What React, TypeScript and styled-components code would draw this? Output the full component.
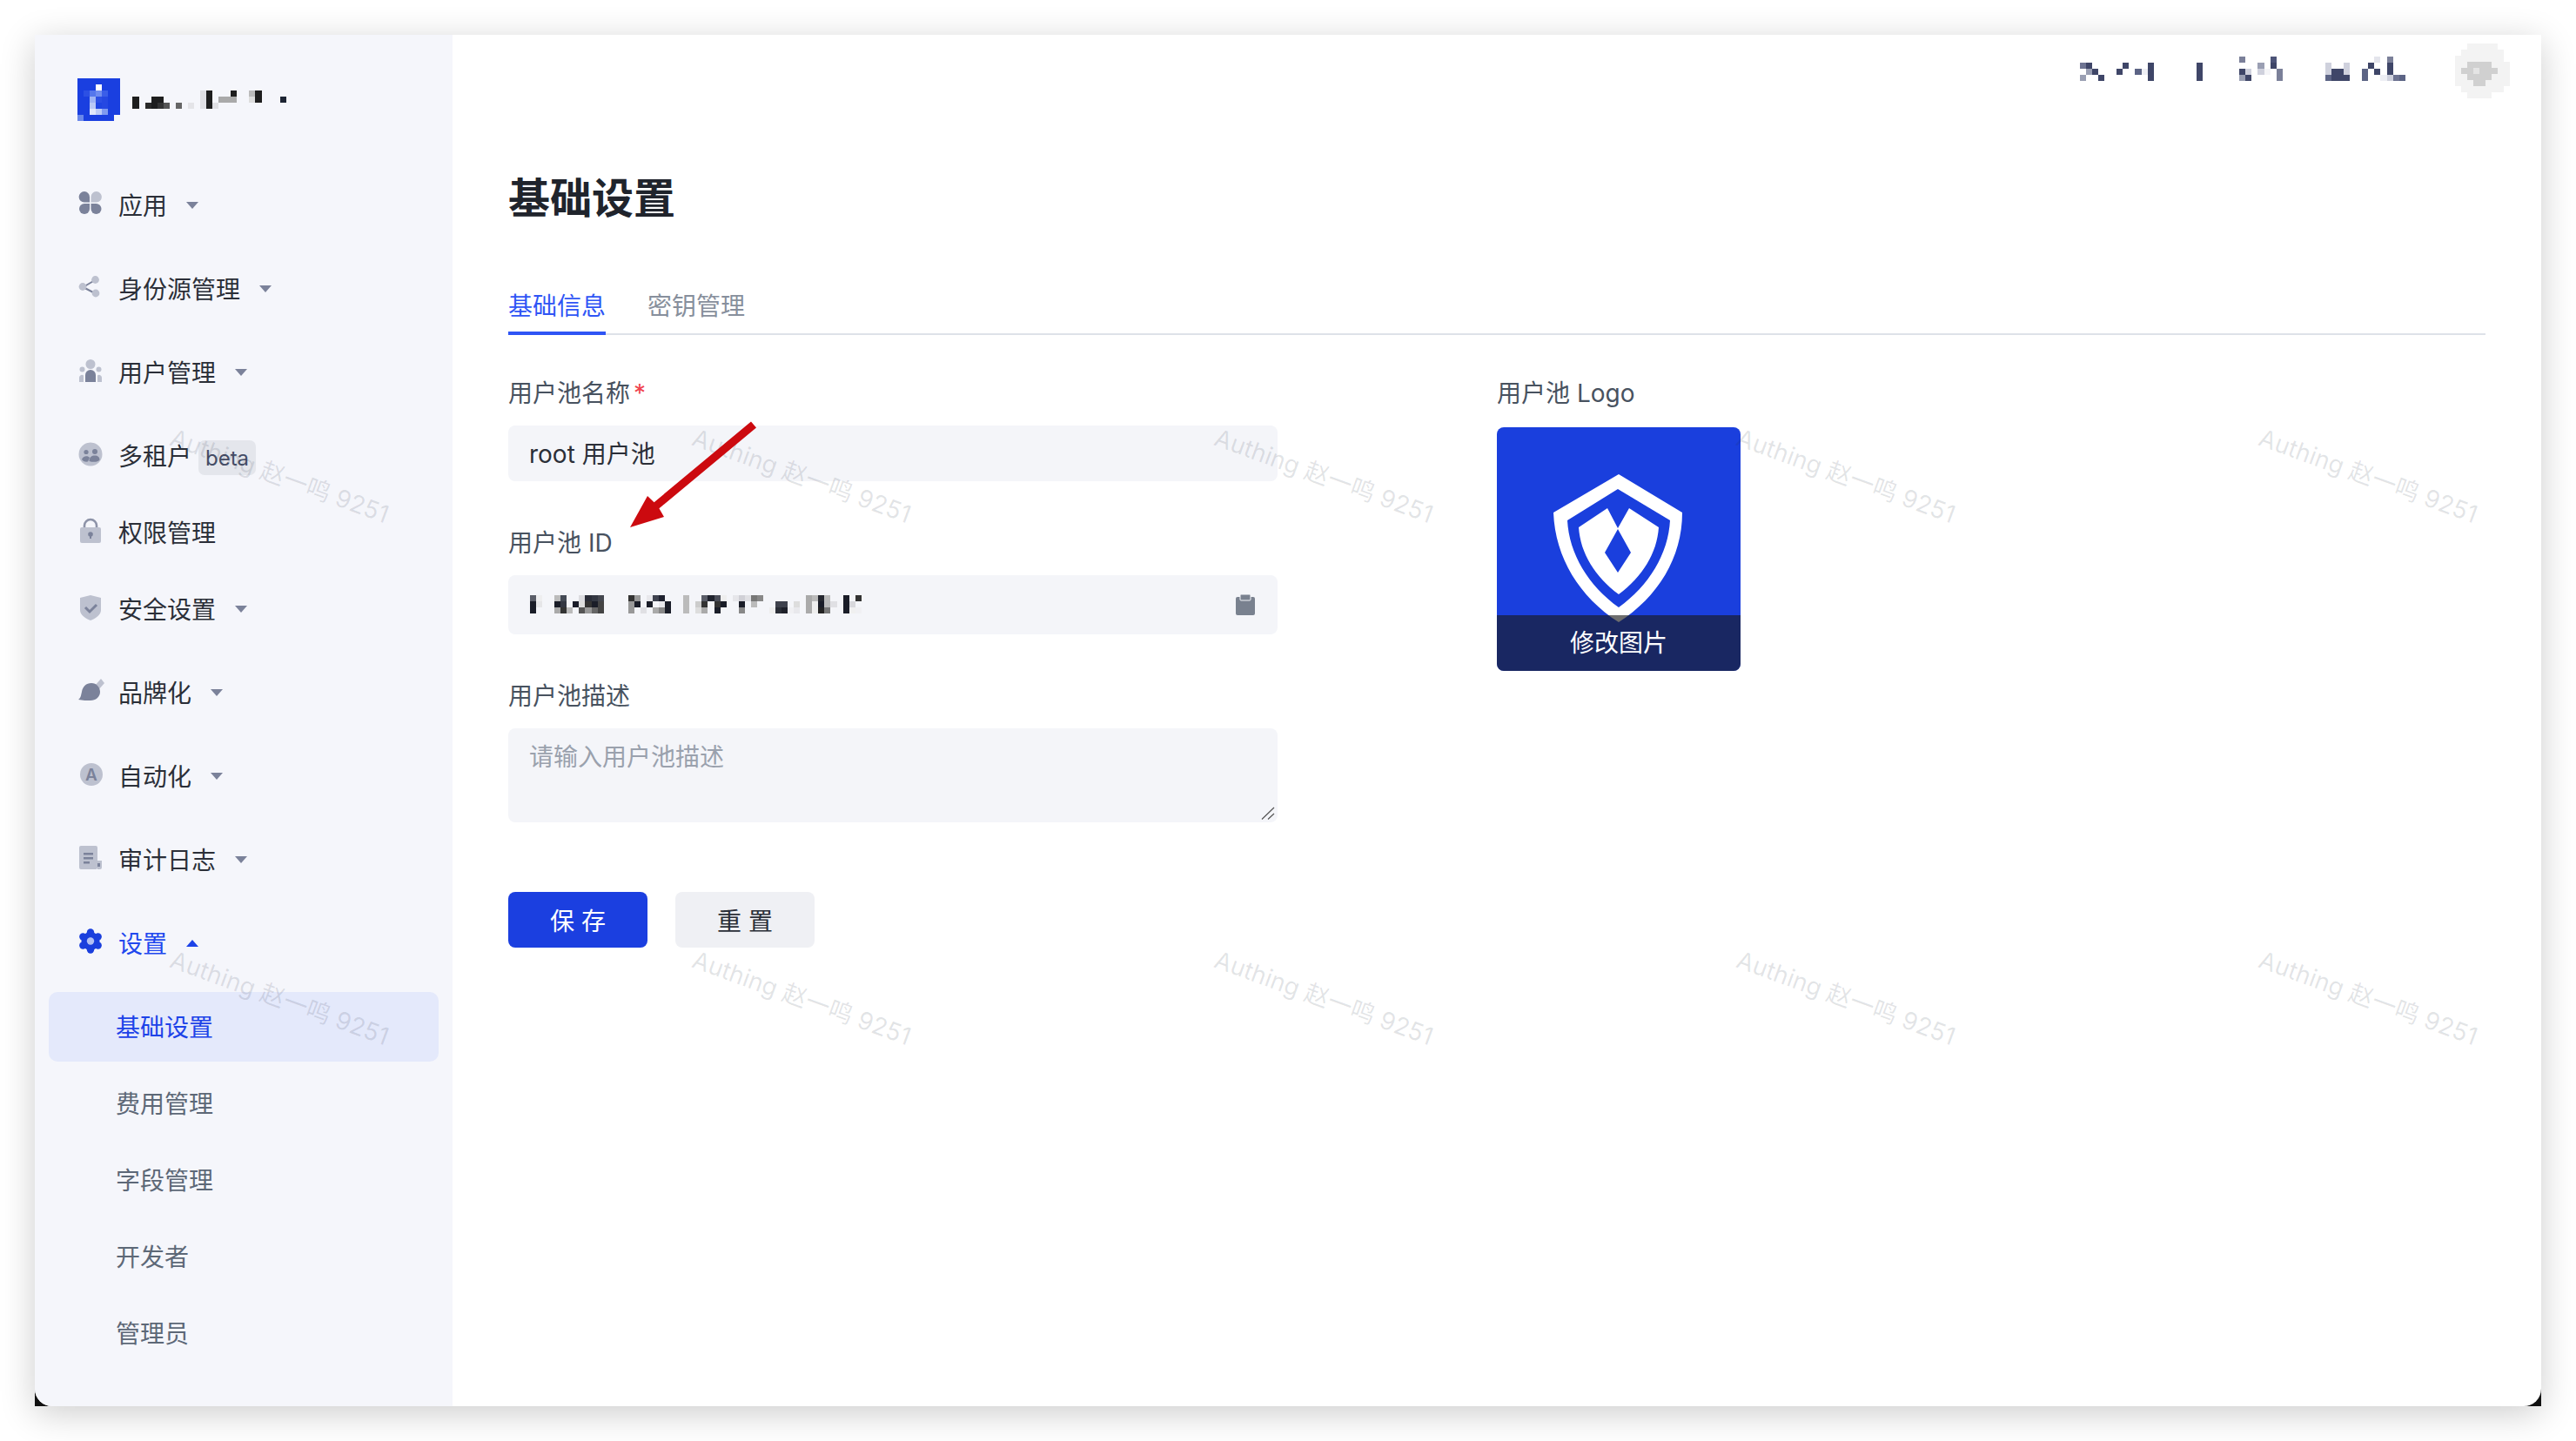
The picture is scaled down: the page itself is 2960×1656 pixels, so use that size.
import React from "react";
import styled, { createGlobalStyle } from "styled-components";

const GlobalStyle = createGlobalStyle`
  html, body {
    margin: 0;
    padding: 0;
    background: #fff;
    font-family: Inter, "Noto Sans CJK SC", sans-serif;
  }
  * {
    box-sizing: border-box;
  }
`;

const Page = styled.div`
  width: 2960px;
  height: 1656px;
  padding: 40px;
  overflow: hidden;
`;

const Frame = styled.div`
  position: relative;
  width: 2880px;
  height: 1576px;
  background: linear-gradient(#fff 50%, #111 50%);
  box-shadow: 0 8px 38px rgba(0, 0, 0, 0.2);
`;

const Shell = styled.div`
  display: flex;
  width: 100%;
  height: 100%;
  overflow: hidden;
  background: #fff;
  border-radius: 0 0 20px 20px;
`;

const Sidebar = styled.aside`
  flex: 0 0 480px;
  padding: 50px 16px 0;
  background: #f5f6fb;
`;

const Brand = styled.div`
  height: 50px;
  margin-left: 33px;
`;

const Nav = styled.nav`
  margin-top: 56px;
`;

const MenuRow = styled.div<{ $group?: boolean; $active?: boolean }>`
  display: flex;
  align-items: center;
  height: 80px;
  margin-bottom: ${(p) => (p.$group ? 16 : 8)}px;
  padding: 0 0 2px 34px;
  font-size: 28px;
  color: ${(p) => (p.$active ? "#2148ee" : "#2b2f38")};
`;

const MenuIcon = styled.svg`
  flex: none;
  width: 30px;
  height: 30px;
  margin-right: 16px;
  overflow: visible;
`;

const Caret = styled.span<{ $open?: boolean }>`
  width: 0;
  height: 0;
  margin: 2px 0 0 22px;
  border-left: 7px solid transparent;
  border-right: 7px solid transparent;
  border-top: ${(p) => (p.$open ? "0" : "8px solid #7b829a")};
  border-bottom: ${(p) => (p.$open ? "8px solid #1d43e8" : "0")};
`;

const Beta = styled.span`
  display: flex;
  align-items: center;
  justify-content: center;
  width: 66px;
  height: 40px;
  margin: 6px 0 0 8px;
  border-radius: 7px;
  background: #e4e6ec;
  color: #454d66;
  font-size: 24px;
`;

const SubRow = styled.div<{ $active?: boolean }>`
  display: flex;
  align-items: center;
  height: 80px;
  margin-bottom: 8px;
  padding: 0 0 2px 77px;
  border-radius: 10px;
  font-size: 28px;
  background: ${(p) => (p.$active ? "#e4e9fb" : "transparent")};
  color: ${(p) => (p.$active ? "#1d43e8" : "#5d6877")};
`;

const Main = styled.main`
  flex: 1;
  min-width: 0;
  display: flex;
  flex-direction: column;
`;

const TopBar = styled.header`
  display: flex;
  justify-content: flex-end;
  align-items: flex-start;
  gap: 57px;
  height: 77px;
  padding: 10px 36px 0 0;
`;

const UserName = styled.div`
  margin-top: 15px;
`;

const Content = styled.div`
  padding: 81px 64px 0;
`;

const Title = styled.h1`
  margin: 0;
  font-size: 48px;
  line-height: 60px;
  font-weight: 600;
  color: #20242c;
`;

const TabBar = styled.div`
  display: flex;
  gap: 48px;
  height: 54px;
  margin-top: 73px;
  border-bottom: 2px solid #dee2e8;
`;

const Tab = styled.div<{ $active?: boolean }>`
  height: 54px;
  padding-top: 1px;
  line-height: 40px;
  font-size: 28px;
  color: ${(p) => (p.$active ? "#2f55f5" : "#878f9c")};
  border-bottom: 4px solid ${(p) => (p.$active ? "#2f55f5" : "transparent")};
`;

const FormGrid = styled.div`
  display: grid;
  grid-template-columns: 884px 280px;
  column-gap: 252px;
  margin-top: 46px;
`;

const Field = styled.div`
  margin-bottom: 50px;
`;

const Label = styled.label`
  display: block;
  padding-top: 1px;
  margin-bottom: 17px;
  font-size: 28px;
  line-height: 40px;
  color: #48525f;
`;

const Required = styled.span`
  margin-left: 4px;
  color: #f0444f;
`;

const TextInput = styled.input`
  display: block;
  width: 100%;
  height: 64px;
  padding: 0 24px 2px;
  border: 0;
  outline: 0;
  border-radius: 8px;
  background: #f4f5f9;
  font: 28px Inter, "Noto Sans CJK SC", sans-serif;
  color: #2b2f38;
`;

const CopyField = styled.div`
  display: flex;
  align-items: center;
  justify-content: space-between;
  height: 68px;
  padding: 0 26px 0 25px;
  border-radius: 8px;
  background: #f4f5f9;
`;

const TextAreaWrap = styled.div`
  position: relative;
`;

const TextArea = styled.textarea`
  display: block;
  width: 100%;
  height: 108px;
  padding: 13px 24px;
  border: 0;
  outline: 0;
  resize: none;
  border-radius: 8px;
  background: #f4f5f9;
  font: 28px/40px Inter, "Noto Sans CJK SC", sans-serif;
  &::placeholder {
    color: #9aa1ad;
  }
`;

const ResizeGrip = styled.svg`
  position: absolute;
  right: 3px;
  bottom: 3px;
  width: 16px;
  height: 15px;
`;

const Actions = styled.div`
  display: flex;
  gap: 32px;
  margin-top: 80px;
`;

const Button = styled.button<{ $primary?: boolean }>`
  width: 160px;
  height: 64px;
  border: 0;
  border-radius: 8px;
  font: 28px Inter, "Noto Sans CJK SC", sans-serif;
  background: ${(p) => (p.$primary ? "#1b3fe0" : "#eff0f4")};
  color: ${(p) => (p.$primary ? "#fff" : "#2b2f38")};
`;

const LogoLabel = styled(Label)`
  margin-bottom: 19px;
`;

const LogoTile = styled.div`
  position: relative;
  width: 280px;
  height: 280px;
  overflow: hidden;
  border-radius: 8px;
  background: #1a3fdd;
`;

const LogoShield = styled.svg`
  display: block;
  width: 280px;
  height: 280px;
`;

const LogoBar = styled.div`
  position: absolute;
  left: 0;
  right: 0;
  bottom: 0;
  height: 64px;
  background: rgba(26, 26, 26, 0.63);
  color: #fff;
  font-size: 28px;
  line-height: 65px;
  text-align: center;
`;

const WatermarkLayer = styled.div`
  position: absolute;
  left: -18px;
  top: 205px;
  display: grid;
  grid-template-columns: repeat(5, 600px);
  grid-auto-rows: 600px;
  pointer-events: none;
`;

const Watermark = styled.div`
  display: flex;
  align-items: center;
  justify-content: center;
  white-space: nowrap;
  font-size: 28px;
  color: rgba(30, 40, 60, 0.13);
  transform: rotate(20deg);
`;

const Arrow = styled.svg`
  position: absolute;
  left: 0;
  top: 0;
  width: 2880px;
  height: 1576px;
  pointer-events: none;
`;

type Cell = [number, number, string];

function Mosaic({ cells, size = 7.05 }: { cells: Cell[]; size?: number }) {
  const cols = Math.max(...cells.map((c) => c[0])) + 1;
  const rows = Math.max(...cells.map((c) => c[1])) + 1;
  return (
    <svg width={cols * size} height={rows * size} shapeRendering="crispEdges" style={{ display: "block" }}>
      {cells.map(([x, y, fill], i) => (
        <rect key={i} x={x * size} y={y * size} width={size} height={size} fill={fill} />
      ))}
    </svg>
  );
}

const fillBlock = (x0: number, x1: number, y0: number, y1: number, color: string) => {
  const out: Cell[] = [];
  for (let y = y0; y <= y1; y++) for (let x = x0; x <= x1; x++) out.push([x, y, color]);
  return out;
};

const K = "#1e1e1e";
const brandCells: Cell[] = [
  ...fillBlock(0, 6, 0, 5, "#1a3fe0"),
  ...fillBlock(0, 5, 6, 6, "#1a3fe0"),
  [0, 6, "#6a88ea"],
  [3, 1, "#ffffff"],
  [1, 2, "#2c50e4"], [2, 2, "#5577ec"], [3, 2, "#6f8cef"], [4, 2, "#3a5ee8"],
  [2, 3, "#9fb4f4"], [3, 3, "#2c4fe4"], [4, 3, "#2548e2"],
  [2, 4, "#b9c9f6"], [3, 4, "#1f45e2"], [4, 4, "#2548e2"],
  [2, 5, "#e0e7fb"], [3, 5, "#bccbf7"], [4, 5, "#7f9af0"],
  [9, 3, K], [9, 4, K],
  [11, 4, "#2a2a2a"], [12, 3, K], [12, 4, K], [13, 3, K], [13, 4, "#333"], [14, 4, "#555"],
  [16, 4, "#666"],
  [18, 4, "#e4e4e8"],
  [20, 2, "#e0e0e4"], [20, 3, "#e0e0e4"], [20, 4, "#e0e0e4"],
  [21, 2, K], [21, 3, K], [21, 4, K],
  [22, 4, "#e0e0e4"],
  [23, 3, "#aaa"], [24, 3, "#aaa"], [25, 3, "#aaa"], [25, 2, K],
  [28, 2, "#bbb"], [28, 3, "#ddd"], [29, 2, K], [29, 3, K],
  [33, 3, "#1d2433"],
];

const D = "#3f4668";
const M = "#5c6485";
const G = "#7b8099";
const L = "#9a9fb3";
const P = "#cfd1dd";
const userCells: Cell[] = [
  [26, 0, G], [31, 0, "#4d5478"], [48, 0, "#e4e5ec"], [50, 0, G],
  [0, 1, "#6e7492"], [1, 1, D], [7, 1, D], [11, 1, D], [19, 1, D], [29, 1, L], [31, 1, D],
  [40, 1, P], [43, 1, P], [47, 1, D], [50, 1, D],
  [1, 2, L], [2, 2, D], [6, 2, D], [9, 2, M], [10, 2, "#eeeff4"], [11, 2, D], [19, 2, D],
  [26, 2, D], [27, 2, P], [29, 2, P], [30, 2, "#f5f5f8"], [32, 2, G],
  [40, 2, P], [41, 2, D], [42, 2, D], [43, 2, P], [46, 2, M], [48, 2, D], [50, 2, D],
  [0, 3, L], [3, 3, D], [11, 3, D], [19, 3, D], [26, 3, L], [27, 3, D], [32, 3, G],
  [40, 3, M], [41, 3, D], [42, 3, D], [43, 3, D], [46, 3, M], [49, 3, "#eeeff4"], [50, 3, P],
  [51, 3, "#6e7492"], [52, 3, M],
];

const A = "#f3f3f3";
const C = "#d0d0d0";
const avatarCells: Cell[] = [
  ...fillBlock(2, 6, 0, 0, A),
  ...fillBlock(1, 7, 1, 1, A),
  ...fillBlock(0, 7, 2, 2, A),
  ...fillBlock(0, 8, 3, 5, A),
  ...fillBlock(0, 8, 6, 6, A),
  ...fillBlock(1, 7, 7, 7, A),
  ...fillBlock(2, 5, 8, 8, A),
  ...fillBlock(2, 5, 3, 3, C),
  ...fillBlock(1, 6, 4, 4, C),
  [3, 4, "#e4e4e4"],
  ...fillBlock(2, 5, 5, 5, C),
  ...fillBlock(3, 4, 6, 6, C),
];

const N = "#1a1d28";
const idCells: Cell[] = [
  [0, 0, "#5a5d68"], [1, 0, "#eeeeef"], [4, 0, "#bbb"], [5, 0, "#444a55"], [8, 0, "#dcdce0"],
  [9, 0, "#2a2d38"], [10, 0, "#333742"], [11, 0, "#44474f"], [16, 0, "#333"], [17, 0, "#999"],
  [19, 0, "#e8e8ec"], [20, 0, "#3f4350"], [21, 0, "#1f2230"], [25, 0, "#bbb"], [28, 0, "#5a5d68"],
  [29, 0, "#20232e"], [30, 0, "#4a4d58"], [31, 0, "#eee"], [33, 0, "#e6e6ea"], [34, 0, "#d0d0d6"],
  [35, 0, "#e0e0e4"], [36, 0, "#777"], [37, 0, "#888"], [45, 0, "#aaa"], [46, 0, "#bbb"],
  [47, 0, "#25272f"], [48, 0, "#bbb"], [51, 0, N], [53, 0, "#333"],
  [0, 1, N], [1, 1, "#e6e6e8"], [4, 1, N], [5, 1, "#333742"], [7, 1, N], [8, 1, "#ddd"], [9, 1, "#333"],
  [10, 1, N], [11, 1, "#444"], [16, 1, "#999"], [17, 1, N], [19, 1, N], [21, 1, "#e8e8ec"], [22, 1, N],
  [25, 1, "#bbb"], [27, 1, "#ccc"], [28, 1, "#333"], [30, 1, "#333"], [31, 1, N], [34, 1, N], [36, 1, "#bbb"],
  [40, 1, "#3f424d"], [41, 1, "#3f424d"], [43, 1, "#ddd"], [45, 1, "#aaa"], [46, 1, "#eee"], [47, 1, N],
  [48, 1, "#bbb"], [49, 1, "#e0e0e4"], [51, 1, N], [52, 1, "#d8d8dc"],
  [0, 2, N], [4, 2, "#aaa"], [5, 2, "#333"], [6, 2, "#bbb"], [8, 2, "#555"], [9, 2, "#999"], [10, 2, "#666"],
  [11, 2, "#444"], [16, 2, "#999"], [18, 2, "#e0e0e4"], [20, 2, "#aaa"], [21, 2, "#888"], [22, 2, N],
  [25, 2, "#bbb"], [27, 2, "#ddd"], [28, 2, "#aaa"], [30, 2, N], [34, 2, "#888"], [39, 2, "#eee"],
  [40, 2, "#2a2d36"], [41, 2, "#1e2029"], [42, 2, "#f0f0f3"], [43, 2, "#e8e8ec"], [45, 2, "#aaa"], [46, 2, "#eee"],
  [47, 2, "#222"], [48, 2, "#777"], [51, 2, N], [52, 2, "#f0f0f0"], [53, 2, "#f0f0f3"],
];

const dark = "#7b829a";
const light = "#bdc1cf";

const icons: Record<string, React.ReactNode> = {
  apps: (
    <>
      <path d="M13 12.5H7a6.2 6.2 0 1 1 6-6z" fill={dark} />
      <path d="M14.5 12.5h6a6.2 6.2 0 1 0-6-6z" fill={light} />
      <path d="M13 14v6a6 6 0 1 1-6-6z" fill={dark} />
      <path d="M14.5 14v6a6 6 0 1 0 6-6z" fill={dark} />
    </>
  ),
  share: (
    <>
      <path d="M5.5 14 19 6M5.5 14 20 21.5" stroke={dark} strokeWidth="2" fill="none" />
      <circle cx="19.5" cy="5.5" r="4.4" fill={light} />
      <circle cx="5" cy="13.5" r="4.4" fill={light} />
      <circle cx="20" cy="21" r="4.4" fill={light} />
    </>
  ),
  users: (
    <>
      <circle cx="14" cy="6.5" r="5.5" fill={light} />
      <circle cx="4.5" cy="12.5" r="3" fill={light} />
      <circle cx="23.5" cy="12.5" r="3" fill={light} />
      <path d="M8 27v-8a6 6 0 0 1 12 0v8z" fill={dark} />
      <path d="M1 27v-5a3 3 0 0 1 5-2.4V27zM27 27v-5a3 3 0 0 0-5-2.4V27z" fill={light} />
    </>
  ),
  tenant: (
    <>
      <circle cx="14" cy="14" r="13.5" fill={light} />
      <circle cx="9" cy="11.5" r="2.6" fill={dark} />
      <circle cx="19" cy="11" r="3" fill={dark} />
      <path d="M4 20c1-4 7-5 9-2l-2 4.5c-3 .5-6-.5-7-2.5z" fill={dark} />
      <path d="M12.5 22c0-5 3-6.500 6.500-6.500s5.500 2 5.500 5c-2 2.500-7 3-12 1.500z" fill={dark} />
    </>
  ),
  lock: (
    <>
      <path d="M7 11V8a7 7 0 0 1 14 0v3" stroke="#8d93a8" strokeWidth="2.6" fill="none" />
      <rect x="2" y="10" width="24" height="18" rx="2" fill={light} />
      <circle cx="14" cy="18" r="2.8" fill={dark} />
      <rect x="13" y="18" width="2" height="5" fill={dark} />
    </>
  ),
  shield: (
    <>
      <path d="M14 0l12 3v14c0 6-7 10-12 12-5-2-12-6-12-12V3z" fill={light} />
      <path d="M8 14l5 5 8-8" stroke={dark} strokeWidth="3" fill="none" />
    </>
  ),
  brush: (
    <>
      <path d="M19 8l7-8 4 5-7 8z" fill={light} />
      <path d="M15 5c6 0 10 5 10 10 0 6-5 10-11 10-4 0-9 0-14-1 3-2 3-5 4-9C5 9 9 5 15 5z" fill={dark} />
    </>
  ),
  auto: (
    <>
      <circle cx="15" cy="14" r="13" fill={light} />
      <text x="15" y="21" textAnchor="middle" fontSize="19" fontWeight="600" fontFamily="Inter, sans-serif" fill={dark}>
        A
      </text>
    </>
  ),
  log: (
    <>
      <rect x="1" y="0" width="21" height="27" rx="2" fill={light} />
      <path d="M22 17h5v8a2 2 0 0 1-2 2h-3z" fill={light} />
      <path d="M6 8h11v2.400H6zM6 13h11v2.400H6zM6 18h7v2.400H6z" fill={dark} />
      <rect x="22" y="20" width="3" height="4" fill={dark} />
    </>
  ),
  gear: (
    <>
      <circle cx="14" cy="13.500" r="10.500" fill="#1a3fdd" />
      {[0, 60, 120, 180, 240, 300].map((a) => (
        <circle
          key={a}
          cx={14 + 10 * Math.sin((a * Math.PI) / 180)}
          cy={13.5 - 10 * Math.cos((a * Math.PI) / 180)}
          r="4.200"
          fill="#1a3fdd"
        />
      ))}
      <circle cx="14" cy="13.500" r="4.200" fill="#b3c0f3" />
    </>
  ),
};

const menu = [
  { label: "应用", icon: "apps", group: true },
  { label: "身份源管理", icon: "share", group: true },
  { label: "用户管理", icon: "users", group: true },
  { label: "多租户", icon: "tenant", beta: true },
  { label: "权限管理", icon: "lock" },
  { label: "安全设置", icon: "shield", group: true },
  { label: "品牌化", icon: "brush", group: true },
  { label: "自动化", icon: "auto", group: true },
  { label: "审计日志", icon: "log", group: true },
];

const subMenu = ["基础设置", "费用管理", "字段管理", "开发者", "管理员"];

const watermarks = Array.from({ length: 10 }, (_, i) => i);

export default function App() {
  return (
    <Page>
      <GlobalStyle />
      <Frame>
        <Shell>
          <Sidebar>
            <Brand>
              <Mosaic cells={brandCells} />
            </Brand>
            <Nav>
              {menu.map((item) => (
                <MenuRow key={item.label} $group={item.group}>
                  <MenuIcon viewBox="0 0 30 30">{icons[item.icon]}</MenuIcon>
                  {item.label}
                  {item.beta && <Beta>beta</Beta>}
                  {item.group && <Caret />}
                </MenuRow>
              ))}
              <MenuRow $group $active>
                <MenuIcon viewBox="0 0 30 30">{icons.gear}</MenuIcon>
                设置
                <Caret $open />
              </MenuRow>
              {subMenu.map((label, i) => (
                <SubRow key={label} $active={i === 0}>
                  {label}
                </SubRow>
              ))}
            </Nav>
          </Sidebar>
          <Main>
            <TopBar>
              <UserName>
                <Mosaic cells={userCells} />
              </UserName>
              <Mosaic cells={avatarCells} />
            </TopBar>
            <Content>
              <Title>基础设置</Title>
              <TabBar>
                <Tab $active>基础信息</Tab>
                <Tab>密钥管理</Tab>
              </TabBar>
              <FormGrid>
                <div>
                  <Field>
                    <Label>
                      用户池名称<Required>*</Required>
                    </Label>
                    <TextInput readOnly value="root 用户池" />
                  </Field>
                  <Field>
                    <Label>用户池 ID</Label>
                    <CopyField>
                      <Mosaic cells={idCells} />
                      <svg width="22" height="24" viewBox="0 0 22 24">
                        <rect x="0" y="3" width="22" height="21" rx="2" fill="#79818f" />
                        <rect x="5" y="0" width="12" height="7" rx="1" fill="#79818f" stroke="#f4f5f9" strokeWidth="1" />
                      </svg>
                    </CopyField>
                  </Field>
                  <Field>
                    <Label>用户池描述</Label>
                    <TextAreaWrap>
                      <TextArea placeholder="请输入用户池描述" />
                      <ResizeGrip viewBox="0 0 16 15">
                        <path d="M1 14.500 15 1M8 14.500 15 8" stroke="#555" strokeWidth="1.200" fill="none" />
                      </ResizeGrip>
                    </TextAreaWrap>
                  </Field>
                  <Actions>
                    <Button $primary>保 存</Button>
                    <Button>重 置</Button>
                  </Actions>
                </div>
                <div>
                  <LogoLabel>用户池 Logo</LogoLabel>
                  <LogoTile>
                    <LogoShield viewBox="0 0 280 280">
                      <path
                        fillRule="evenodd"
                        fill="#fff"
                        d="M140 54L213 98C213 150 185 195 140 224C95 195 67 150 65 98ZM139 71L81 107C83 145 105 182 140 207C175 182 197 145 199 107Z"
                      />
                      <path
                        fillRule="evenodd"
                        fill="#fff"
                        d="M127 93L139 116L152 93L186 115C184 145 167 172 140 192C113 172 96 145 94 115ZM139 117L124 144L139 167L154 144Z"
                      />
                    </LogoShield>
                    <LogoBar>修改图片</LogoBar>
                  </LogoTile>
                </div>
              </FormGrid>
            </Content>
          </Main>
        </Shell>
        <WatermarkLayer>
          {watermarks.map((i) => (
            <Watermark key={i}>Authing 赵一鸣 9251</Watermark>
          ))}
        </WatermarkLayer>
        <Arrow viewBox="40 40 2880 1576">
          <polygon
            fill="#cc0a0f"
            points="863,484.500 869,491.500 757.400,584.200 763,594 724,606 744,570 751.600,577.200"
          />
        </Arrow>
      </Frame>
    </Page>
  );
}
